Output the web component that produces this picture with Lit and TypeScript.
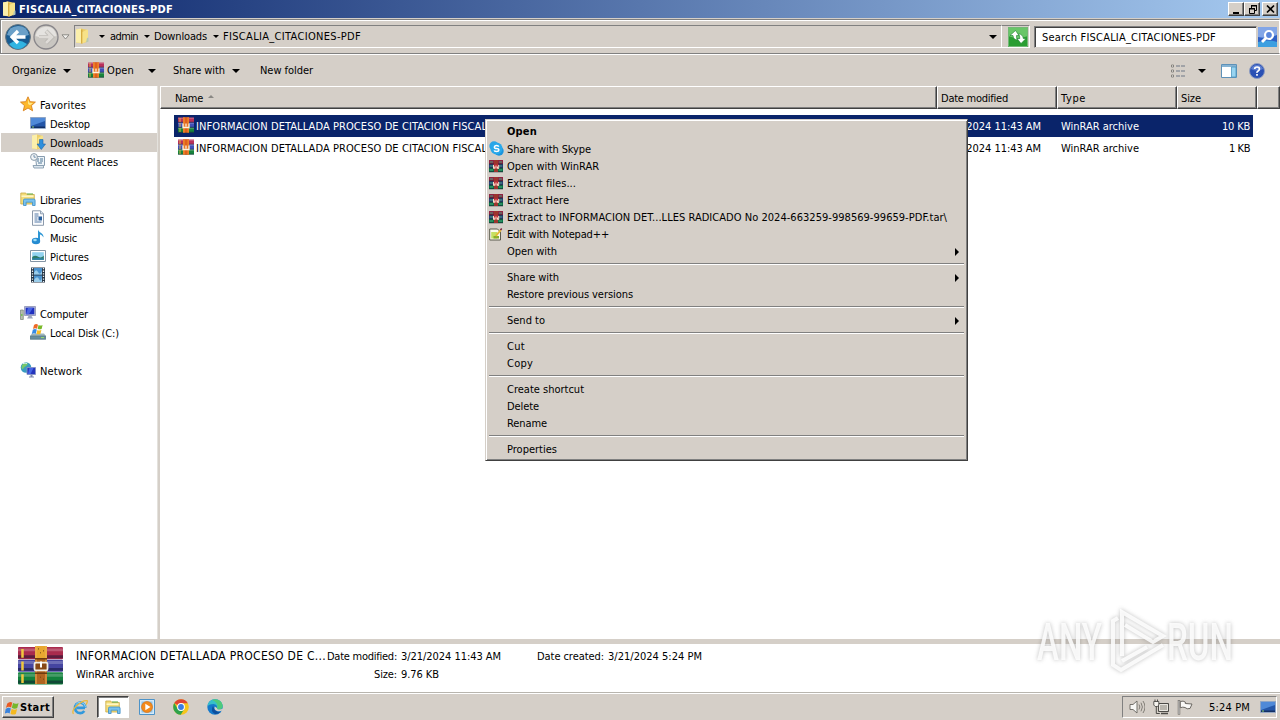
import { LitElement, html, css, svg, nothing, TemplateResult } from 'lit';
import { customElement, property } from 'lit/decorators.js';
import { classMap } from 'lit/directives/class-map.js';
import { styleMap } from 'lit/directives/style-map.js';

const FAMILY = '"DejaVu Sans Condensed", "DejaVu Sans", "Liberation Sans", sans-serif';

const FONTS: Record<string, string> = {
  normal: `11px ${FAMILY}`,
  bold: `bold 11px ${FAMILY}`,
  large: `12px ${FAMILY}`,
};

const ctx = document.createElement('canvas').getContext('2d')!;

/**
 * Single line of text tracked to a given width
 *
 * @tag xp-label
 */
@customElement('xp-label')
export class XpLabel extends LitElement {
  static styles = css`
    :host {
      display: block;
      flex: none;
      line-height: 15px;
      white-space: pre;
    }

    span {
      display: block;
      overflow: visible;
    }
  `;

  @property({ type: String }) text = '';
  @property({ type: Number }) w = 0;
  @property({ type: String }) kind = 'normal';

  render() {
    ctx.font = FONTS[this.kind];
    const spacing = (this.w - ctx.measureText(this.text).width) / this.text.length;
    const style = {
      font: FONTS[this.kind],
      'line-height': '15px',
      'letter-spacing': `${spacing.toFixed(3)}px`,
      width: `${this.w}px`,
    };
    return html`<span style=${styleMap(style)}>${this.text}</span>`;
  }
}

const label = (text: string, w: number, kind = 'normal') =>
  html`<xp-label .text=${text} .w=${w} .kind=${kind}></xp-label>`;

const ICONS: Record<string, TemplateResult> = {
  folder: svg`
    <path d="M1 1.500l5-1 7 1.500v11.500l-6 2-6-1z" fill="#edcf69"/>
    <path d="M1 1.500l5-1v14.500l-5-.5z" fill="#fbefab"/>
    <path d="M6 1.500h1.500v14H6z" fill="#d7ad42"/>
    <path d="M7.500 4l4.500-2.500 1 .5v10.500l-5.500 3z" fill="#f7e288"/>
    <path d="M12 10l1.500-.5v4l-2.500 1z" fill="#b5c9b4"/>`,
  rar: svg`
    <path d="M0 .5h16v5H0z" fill="#b8305a"/>
    <path d="M0 5.500h16v5H0z" fill="#4050b8"/>
    <path d="M0 10.500h16v5H0z" fill="#17843c"/>
    <path d="M0 1.200h16M0 6.200h16M0 11.200h16" stroke="#fff" stroke-opacity=".28"/>
    <path d="M0 5.200h16M0 10.200h16M0 15.200h16" stroke="#17203c" stroke-opacity=".75" stroke-width=".7"/>
    <path d="M2 1v4M2 6v4M2 11v4" stroke="#e8bf45" stroke-width=".9"/>
    <path d="M5 .3h6v15.400H5z" fill="#e2601a"/>
    <path d="M5.500.3h.9v15.400h-.9zM9.700.3h.8v15.400h-.8z" fill="#f4a63c"/>
    <path d="M5 6.500v4h6v-4M8 6.500v3" fill="none" stroke="#fff4dc" stroke-width="1.300"/>`,
  rarBig: svg`
    <rect width="45" height="12.500" y="1" rx="1" fill="#a92b4d"/>
    <rect width="45" height="12.500" y="14" rx="1" fill="#4545a0"/>
    <rect width="45" height="12.500" y="27" rx="1" fill="#12813d"/>
    <path d="M0 4h45M0 17h45M0 30h45" stroke="#fff" stroke-opacity=".22" stroke-width="3"/>
    <path d="M0 11h45M0 24h45M0 37h45" stroke="#100f30" stroke-opacity=".5" stroke-width="3"/>
    <path d="M4.500 3v9M4.500 16v9M4.500 29v9" stroke="#efc83e" stroke-width="2.500"/>
    <path d="M17 0h12v39H17z" fill="#b06420"/>
    <path d="M17 0h12v13H17z" fill="#e8a730"/>
    <path d="M18 0v39M28 0v39" stroke="#f1b65a" stroke-width="1"/>
    <path d="M17 13h12M17 28h12" stroke="#6d3a10" stroke-width="1.500"/>
    <path d="M20 3h1M25 5h1M22 7h1M22 32h1M25 34h1" stroke="#704414" stroke-width="1"/>
    <rect x="16.500" y="17" width="13" height="8" rx="1.500" fill="#874815" stroke="#f1eee4" stroke-width="1.800"/>
    <path d="M23 16v6" stroke="#fff" stroke-width="2"/>`,
  rarMenu: svg`
    <path d="M0 1h14v4H0z" fill="#8f2342"/>
    <path d="M0 5h14v4H0z" fill="#283f79"/>
    <path d="M0 9h14v4H0z" fill="#087847"/>
    <path d="M0 5h14M0 9h14M0 12.800h14" stroke="#192a32" stroke-width=".8"/>
    <path d="M1 3h3M10 3h3M1 7h3M10 7h3M1 11h3M10 11h3" stroke="#4ba27d"/>
    <path d="M5 1h4v12H5z" fill="#9c352d"/>
    <path d="M4 5.500h6v4.200H4z" fill="#c02b3a"/>
    <path d="M4.500 6v3.400h1.200V7.500M7 6.500v3M8.500 7.500v2h1.200V6" fill="none" stroke="#f3e1c9"/>`,
  star: svg`
    <path d="M8 .8l2.100 4.900 5.300.4-4 3.500 1.200 5.200L8 12l-4.700 2.800 1.200-5.200-4-3.500 5.300-.4z" fill="#fdb92d" stroke="#d9811f" stroke-width=".9"/>
    <path d="M8 3l1.300 3.700 3.700.4-3 2.200L8 8z" fill="#ffe889"/>`,
  desktop: svg`
    <path d="M.5 2.500h15v10.800H.5z" fill="#2456a8" stroke="#8fa5c5"/>
    <path d="M1 3h14v3L1 11z" fill="#4f89d8"/>
    <path d="M1 11.500h14v1.500H1z" fill="#122f64"/>
    <path d="M2 12h2" stroke="#8ed06c"/>`,
  downloads: svg`
    <path d="M2 1.500l5-1 6 1.500v11.500l-6 2-5-1z" fill="#edcf69"/>
    <path d="M2 1.500l5-1v14.500l-5-.5z" fill="#fbefab"/>
    <path d="M8 4l4-2.500 1 .5v9l-5 3z" fill="#f7e288"/>
    <path d="M9.500 5.500h3.500V10h2.500l-4.200 5.500L7 10h2.500z" fill="#2e8fdd" stroke="#1c63a8" stroke-width=".6"/>`,
  recent: svg`
    <path d="M5.500 3.500h9v9h-8z" fill="#eef4f8" stroke="#879caf"/>
    <path d="M3 12.500h10.500v2.500H4z" fill="#dce6ee" stroke="#879caf" stroke-width=".9"/>
    <path d="M7 6h2M10 6h3M7 8h2M10 8h3M8 10h4" stroke="#4f7796"/>
    <circle cx="4" cy="4" r="3.400" fill="#f2f5f7" stroke="#8a9baa"/>
    <path d="M4 2v2.200h1.800" fill="none" stroke="#55799d" stroke-width=".8"/>`,
  libraries: svg`
    <path d="M.8 2h5l1 1.500h7.500v9.500H.8z" fill="#f3dc79" stroke="#c9a945" stroke-width=".8"/>
    <path d="M1.500 5.200h12" stroke="#fff7c8" stroke-width="1.500"/>
    <path d="M7 3h6" stroke="#76b559" stroke-width="1.200"/>
    <path d="M3.500 14.500V9.300q0-1.300 1.300-1.300h9q1.300 0 1.300 1.300v5.200h-2.600v-3.300H6.100v3.300z" fill="#79c1ee" stroke="#3c8dc4" stroke-width=".8"/>`,
  documents: svg`
    <path d="M2.500.8h8l3 3v11.500h-11z" fill="#fbfcfe" stroke="#7f8fa3" stroke-width=".9"/>
    <path d="M10.500.8v3h3" fill="#d9e4f0" stroke="#7f8fa3" stroke-width=".8"/>
    <path d="M4.500 4h4M4.500 6h4M4.500 8h3M4.500 10h3M4.500 12h7" stroke="#426b9d" stroke-width=".9"/>
    <path d="M8.500 6.500h3.500v4H8.500z" fill="#285f9d"/>`,
  music: svg`
    <path d="M8 .5c.5 3 6 3.500 5.500 8-.7-1.500-2.200-2.800-3.500-3V12H8z" fill="#2d96d4"/>
    <ellipse cx="6" cy="12" rx="4.200" ry="3.300" fill="#258bd1"/>
    <ellipse cx="5" cy="11" rx="1.800" ry="1.200" fill="#9bdcf6"/>`,
  pictures: svg`
    <path d="M.5 2.500h15v11H.5z" fill="#fff" stroke="#8495a5"/>
    <path d="M2.200 4.200h11.600v7.600H2.200z" fill="#91d2ef"/>
    <path d="M2.200 9q3-2.200 6-.2t5.600-1.200v4.200H2.200z" fill="#2d7b68"/>
    <path d="M2.200 10.500q6-1 11.600 0v1.300H2.200z" fill="#2c82ad"/>`,
  videos: svg`
    <path d="M1 .5h14v15H1z" fill="#273544"/>
    <path d="M4 1h8v6.500H4zM4 8.500h8V15H4z" fill="#4b93cf"/>
    <path d="M4 6q2-5 4-1t4-1v3.500H4zM4 13q3-5 5-1t3-2v5H4z" fill="#9bcdea"/>
    <path d="M2.500 1v14M13.500 1v14" stroke="#eaf1f6" stroke-width="1.300" stroke-dasharray="1.300 1.300"/>`,
  computer: svg`
    <path d="M.5 5h2.800v9.500H.5z" fill="#b7bfae" stroke="#76827a" stroke-width=".7"/>
    <path d="M1.200 9h1.200v2H1.200z" fill="#6bc246"/>
    <path d="M4.500 1.500h11v9h-11z" fill="#b6bbd8" stroke="#8b90b4" stroke-width=".8"/>
    <path d="M5.700 2.700h8.600v6.600H5.700z" fill="#1f2fc0"/>
    <path d="M8 2.700h5L9 9.300H6z" fill="#4965e4"/>
    <path d="M8.500 11h3l1.500 2.500H7z" fill="#9aa3bd"/>`,
  disk: svg`
    <path d="M2 9.500h12l2 2.500v3.500H0V12z" fill="#9eb5bd"/>
    <path d="M.3 12h15.400v3.200H.3z" fill="#688e9d" stroke="#527481" stroke-width=".6"/>
    <path d="M11 13.600h3" stroke="#9be06a"/>
    <path d="M4 1q2-1.600 4-.3L7 4.700Q5 3.700 3 5z" fill="#ee6a28"/>
    <path d="M8.600 1q2 1 4 0l-1 4q-2 .8-4-.2z" fill="#79b928"/>
    <path d="M2.800 5.700q2-1.300 4-.2l-1 4.200q-2-1-4 .2z" fill="#358be4"/>
    <path d="M7.400 5.900q2 1 4 .1l-1 4q-2 .8-4-.2z" fill="#f7bd26"/>`,
  network: svg`
    <circle cx="6" cy="5.500" r="5.300" fill="#3a9cc0"/>
    <path d="M2 3q3-3 5-2T6 4 3 7 1.500 6zM7 5l3 1-2 3z" fill="#77c96a"/>
    <path d="M3 1.700Q5 .5 7 1.500" stroke="#d9f3f8" fill="none"/>
    <path d="M7 5.500h8.500v7H7z" fill="#2435bd" stroke="#8590c4" stroke-width=".9"/>
    <path d="M9.500 6h4l-3 6H8z" fill="#4565e6"/>
    <path d="M10.500 13h2v1.500h1.500v1H9v-1h1.500z" fill="#7f8aae"/>`,
  skype: svg`
    <circle cx="5" cy="5" r="4.700" fill="#2ba5e6"/>
    <circle cx="10" cy="10" r="4.700" fill="#1b94dd"/>
    <circle cx="7.500" cy="7.500" r="6" fill="#28a8ea"/>
    <path d="M9.800 5.600Q9.300 4.500 7.500 4.500T5.400 6t2.100 1.500T9.800 9 7.500 10.500 5.200 9.400" fill="none" stroke="#fff" stroke-width="1.500"/>`,
  notepad: svg`
    <path d="M.7 2h7.800L11.500 5v8H.7z" fill="#fbfbf0" stroke="#5b5a4c"/>
    <path d="M2.200 5h6v6.500h-6z" fill="#c5df62"/>
    <path d="M4.500 9h5.500v2.500H4.500z" fill="#87ae2c"/>
    <path d="M6 8.500l5-6 1.500 1.200-5 5.800z" fill="#e5b936"/>
    <path d="M11.500 1.800l1.200 1" stroke="#7a1b37" stroke-width="2"/>`,
  flag: svg`
    <path d="M2.600 3.500Q5.500.8 8.300 2.600L7 7.500Q4 5.800 1 8z" fill="#e95a22"/>
    <path d="M9.200 3q3 1.700 6.300-.1L14 8q-3 1.500-6.200-.2z" fill="#76b72c"/>
    <path d="M.8 9Q4 6.800 6.700 8.500l-1.400 5Q3 11.800-.3 13.800z" fill="#3a83dc"/>
    <path d="M7.600 8.800q3 1.700 6.200.1l-1.400 5q-3 1.500-6.100-.2z" fill="#f4b91f"/>`,
  ie: svg`
    <path d="M13 8.900H4.500M13.300 8.800A5.200 5.200 0 1 0 12.300 12" fill="none" stroke="#3299dc" stroke-width="2.700"/>
    <path d="M13.500 8A5.400 5.400 0 0 0 3.500 6" fill="none" stroke="#8fd6f8" stroke-width="1"/>
    <path d="M1.500 14.800Q-.8 12 5 6.500T15 1.600q1 .9-1 4" fill="none" stroke="#ebb93c" stroke-width="1.300"/>`,
  wmp: svg`
    <path d="M.5.500h15v15H.5z" fill="#d3e9f9" stroke="#4d93c8"/>
    <path d="M2.500 2.500h11v11h-11z" fill="#8dc0e5"/>
    <circle cx="8" cy="8" r="5.500" fill="#f38a1c" stroke="#d46a0b" stroke-width=".6"/>
    <path d="M6.300 4.800L11.500 8l-5.200 3.200z" fill="#fff"/>`,
  chrome: svg`
    <circle cx="8" cy="8" r="7.800" fill="#f6c51b"/>
    <path d="M8 8L1.200 4.100A7.800 7.800 0 0 1 14.800 4.200H8z" fill="#df4434"/>
    <path d="M1.250 4.100A7.800 7.800 0 0 0 7.700 15.800L11.300 9.900 8 8 4.700 9.900z" fill="#2fa24c"/>
    <circle cx="8" cy="8" r="3.900" fill="#fff"/>
    <circle cx="8" cy="8" r="2.900" fill="#3b7de3"/>`,
  edge: svg`
    <circle cx="8" cy="8" r="7.700" fill="#1579cb"/>
    <path d="M.5 7Q1.500.3 8 .3t7.700 6.500q0 3.500-4 3.700-2.300 0-1.700-1.200.5-3.800-3.500-4.300Q2.500 5 .5 7z" fill="#37bfca"/>
    <path d="M8 .3q6.500 0 7.700 6.500 0 3.500-4 3.700l-1.700-.8q2-6-5-8.800z" fill="#4fca7b"/>
    <path d="M6 7q-3 5 2 8 3 .5 5.500-2-5.500.5-7.500-6z" fill="#0d4f9d"/>
    <path d="M7.800 7.500Q6.500 10.500 10 12q3 .7 6-.8V9.700q-2.300.9-4.500.8-2-.2-1.500-1.500z" fill="#d6cfc8"/>`,
  sound: svg`
    <path d="M1 5.500h3L8 2v12L4 10.500H1z" fill="#f7f7f5" stroke="#66645f" stroke-width=".9"/>
    <path d="M10 5.500q1.700 2.500 0 5M12 3.700q2.800 4.300 0 8.600M14 2q4 6 0 12" fill="none" stroke="#77746d" stroke-width=".9"/>`,
  lan: svg`
    <path d="M5.500 4.500h10v8h-10z" fill="#b9b5ad" stroke="#4d4b47"/>
    <path d="M6.500 5.500h8v6h-8z" fill="none" stroke="#f4f2ee" stroke-width=".8"/>
    <path d="M8 14.500h7" stroke="#4d4b47" stroke-width="1.500"/>
    <path d="M.8 2.500h5v3.500L4.500 7.500H2.200L.8 6z" fill="#f5f3ee" stroke="#4d4b47" stroke-width=".9"/>
    <path d="M2 2.500V.5M4.500 2.500V.5M3.300 7.500v7h3.500" fill="none" stroke="#4d4b47"/>`,
  action: svg`
    <path d="M2 1v14.500" stroke="#5d5a55" stroke-width="2.400"/>
    <path d="M2 1.500v13.500" stroke="#fff" stroke-width=".9"/>
    <path d="M3.300 2.500q3-1 5 .5v1.500l6.700.5-2 4.500q-3 1-5-1-2-.8-4.700.2z" fill="#faf9f7" stroke="#5d5a55" stroke-width=".9"/>`,
  views: svg`
    <path d="M1.500 2h2v2h-2zM1.500 7h2v2h-2zM1.500 12h2v2h-2z" fill="#fff" stroke="#85827d"/>
    <path d="M6 3h4M11 3h4M6 8h4M11 8h4M6 13h4M11 13h4" stroke="#6f7886" stroke-width="1.200"/>`,
  preview: svg`
    <path d="M.5 1.500h15v13H.5z" fill="#fff" stroke="#5d91b8"/>
    <path d="M1 2h14v2H1z" fill="#86b3d3"/>
    <path d="M10.500 4h4.500v10h-4.500z" fill="#98d4f1" stroke="#4d96be" stroke-width=".8"/>`,
  help: svg`
    <circle cx="8" cy="8" r="7.500" fill="#2a50b4" stroke="#8e9cc0"/>
    <path d="M2 6q1-4 6-4t6 4q-6 3-12 0z" fill="#7d9be2" fill-opacity=".6"/>
    <path d="M5.700 6q0-2 2.400-2t2.300 2q0 1.200-1.300 1.900T8 9.800M8 11v1.700" fill="none" stroke="#fff" stroke-width="1.700"/>`,
  go: svg`
    <path d="M0 0h20v20H0z" fill="#2a9e32"/>
    <path d="M0 0h20v9Q10 13 0 9z" fill="#69c668"/>
    <path d="M.5.5h19v19H.5z" fill="none" stroke="#72b875"/>
    <path d="M7.500 3.500L2 8.500h3q.2 4 4.500 4.500-1.300-2-1-4.500H11z" fill="#fff" stroke="#16812b" stroke-width=".6"/>
    <path d="M13 16.500l5-5h-2.700Q15 7.500 10.500 6.800q1.500 2 1.300 4.700H9z" fill="#fff" stroke="#16812b" stroke-width=".6"/>`,
  search: svg`
    <path d="M0 0h19v20H0z" fill="#2e5fc4"/>
    <path d="M0 0h19v8Q10 12 0 10z" fill="#83a6e7"/>
    <path d="M0 15q10-3 19 0v5H0z" fill="#3d9fe0"/>
    <circle cx="11" cy="8" r="4" fill="#5a86dc" stroke="#fff" stroke-width="2.200"/>
    <path d="M8 11l-4 4" stroke="#fff" stroke-width="2.800"/>`,
  back: svg`
    <circle cx="13" cy="13" r="12.400" fill="#195b91" stroke="#62727d"/>
    <path d="M2 11Q4 2.200 13 2T24 11Q13 15 2 11z" fill="#6ba0c8"/>
    <path d="M4 20q9-7 18 0-4 5-9 5t-9-5z" fill="#31b4e2"/>
    <path d="M13 7l-6 6 6 6M7.500 13H20.500" fill="none" stroke="#fff" stroke-width="3.300"/>`,
  forward: svg`
    <circle cx="13" cy="13" r="12" fill="#c9c6c1" stroke="#88868a" stroke-width="1.300"/>
    <path d="M2.500 12Q4 3 13 2.700T23.500 12Q13 16 2.500 12z" fill="#e5e3e0"/>
    <path d="M13 7l6 6-6 6M18.500 13H6" fill="none" stroke="#b4b1ac" stroke-width="4"/>
    <path d="M13 7l6 6-6 6M18.500 13H6" fill="none" stroke="#dedbd7" stroke-width="2.800"/>`,
  history: svg`<path d="M1 .8h7L4.500 5z" fill="#f3f1ee" stroke="#85827e" stroke-width=".9"/>`,
  minimize: svg`<path d="M3 10h6" stroke="#000" stroke-width="2"/>`,
  restore: svg`<path d="M5 2.500h6M5.500 2v3M10.500 2v5.500H9M3 5.500h6M3.500 5v5.500h5V5" fill="none" stroke="#000"/><path d="M5 2h6v1.500H5zM3 5h6v1.500H3z"/>`,
  close: svg`<path d="M3 2.500l7 7M10 2.500l-7 7" stroke="#000" stroke-width="1.700"/>`,
};

const icon = (name: string, width = 16, height = width, box = `0 0 ${width} ${height}`) =>
  html`<svg class="icon" width=${width} height=${height} viewBox=${box} preserveAspectRatio="none">${ICONS[name]}</svg>`;

interface NavItem {
  text: string;
  w: number;
  icon: string;
  child?: boolean;
  selected?: boolean;
}

const NAV: NavItem[][] = [
  [
    { text: 'Favorites', w: 46, icon: 'star' },
    { text: 'Desktop', w: 40, icon: 'desktop', child: true },
    { text: 'Downloads', w: 53, icon: 'downloads', child: true, selected: true },
    { text: 'Recent Places', w: 68, icon: 'recent', child: true },
  ],
  [
    { text: 'Libraries', w: 41, icon: 'libraries' },
    { text: 'Documents', w: 54, icon: 'documents', child: true },
    { text: 'Music', w: 27, icon: 'music', child: true },
    { text: 'Pictures', w: 39, icon: 'pictures', child: true },
    { text: 'Videos', w: 32, icon: 'videos', child: true },
  ],
  [
    { text: 'Computer', w: 48, icon: 'computer' },
    { text: 'Local Disk (C:)', w: 69, icon: 'disk', child: true },
  ],
  [{ text: 'Network', w: 42, icon: 'network' }],
];

const FILES = [
  { size: '10 KB', sizeWidth: 28, selected: true },
  { size: '1 KB', sizeWidth: 21, selected: false },
];

interface MenuItem {
  text: string;
  w: number;
  icon?: string;
  bold?: boolean;
  sub?: boolean;
}

const MENU: MenuItem[][] = [
  [
    { text: 'Open', w: 30, bold: true },
    { text: 'Share with Skype', w: 84, icon: 'skype' },
    { text: 'Open with WinRAR', w: 92, icon: 'rarMenu' },
    { text: 'Extract files...', w: 69, icon: 'rarMenu' },
    { text: 'Extract Here', w: 62, icon: 'rarMenu' },
    { text: 'Extract to INFORMACION DET...LLES RADICADO No 2024-663259-998569-99659-PDF.tar\\', w: 440, icon: 'rarMenu' },
    { text: 'Edit with Notepad++', w: 102, icon: 'notepad' },
    { text: 'Open with', w: 50, sub: true },
  ],
  [
    { text: 'Share with', w: 52, sub: true },
    { text: 'Restore previous versions', w: 126 },
  ],
  [{ text: 'Send to', w: 38, sub: true }],
  [
    { text: 'Cut', w: 18 },
    { text: 'Copy', w: 26 },
  ],
  [
    { text: 'Create shortcut', w: 77 },
    { text: 'Delete', w: 32 },
    { text: 'Rename', w: 40 },
  ],
  [{ text: 'Properties', w: 50 }],
];

/**
 * Explorer window with context menu and taskbar
 *
 * @tag app-root
 */
@customElement('app-root')
export class AppRoot extends LitElement {
  static styles = css`
    :host {
      --face: #d5cfc8;

      position: relative;
      display: flex;
      flex-direction: column;
      width: 1280px;
      height: 720px;
      overflow: hidden;
      background: var(--face);
      color: #000;
    }

    *,
    *::before {
      box-sizing: border-box;
    }

    .icon {
      display: block;
      flex: none;
    }

    .arrow {
      flex: none;
      width: 0;
      height: 0;
      border: 4px solid transparent;
      border-top-color: #000;
      border-bottom: 0;
    }

    .arrow--sm {
      border-width: 3px 3px 0;
    }

    .title {
      display: flex;
      align-items: center;
      height: 18px;
      padding: 0 2px 0 2px;
      background: linear-gradient(90deg, #0a246a, #a6caf0);
      color: #fff;
    }

    .title xp-label {
      margin-left: 1px;
    }

    .title .winbtn:first-of-type {
      margin-left: auto;
    }

    .winbtn {
      width: 16px;
      height: 14px;
      padding: 0 1px;
      background: var(--face);
      border: 1px solid;
      border-color: #fff #404040 #404040 #fff;
      box-shadow: inset -1px -1px #808080;
    }

    .winbtn--close {
      margin-left: 2px;
    }

    .address {
      display: flex;
      align-items: center;
      height: 35px;
      margin-top: 1px;
      padding-left: 4px;
      border: 1px solid;
      border-color: #808080 #fff #808080 #808080;
      box-shadow: inset 1px 1px #fff;
    }

    .nav-buttons {
      display: flex;
      align-items: center;
      gap: 2px;
      width: 69px;
    }

    .path {
      display: flex;
      align-items: center;
      width: 928px;
      height: 23px;
      padding-right: 4px;
      border: 1px solid;
      border-color: #808080 #fff #fff #808080;
    }

    .path > .icon {
      margin-bottom: 2px;
    }

    .path .arrow--sm {
      margin: 0 4px 0 6px;
    }

    .path > .icon + .arrow--sm {
      margin: 0 5px 0 8px;
    }

    .path .arrow--end {
      margin-left: auto;
    }

    .refresh {
      display: flex;
      align-items: center;
      width: 28px;
      height: 23px;
      padding-left: 6px;
      border: 1px solid #fff;
      border-left: 0;
      border-top-color: #808080;
    }

    .search {
      display: flex;
      align-items: center;
      width: 223px;
      height: 22px;
      margin-left: 4px;
      padding: 2px 0 0 7px;
      background: #fff;
      border: 1px solid;
      border-color: #808080 var(--face) var(--face) #808080;
      box-shadow: inset 1px 1px #404040;
    }

    .address > .icon {
      margin-left: 1px;
    }

    .toolbar {
      display: flex;
      align-items: center;
      height: 32px;
      padding: 0 15px 0 12px;
      border-top: 1px solid #fff;
    }

    .toolbar > .icon {
      margin-bottom: 2px;
    }

    .toolbar .arrow {
      margin-left: 7px;
    }

    .toolbar .icon + xp-label {
      margin-left: 3px;
    }

    .toolbar .gap {
      width: 17px;
    }

    .toolbar .gap--wide {
      width: 20px;
    }

    .toolbar .arrow--open {
      margin-left: 14px;
    }

    .toolbar-right {
      display: flex;
      align-items: center;
      margin-left: auto;
    }

    .toolbar-right .arrow {
      margin: 0 15px 0 12px;
    }

    .toolbar-right .icon:last-child {
      margin-left: 12px;
    }

    .body {
      display: flex;
      height: 553px;
    }

    .sidebar {
      width: 158px;
      padding-top: 9px;
      background: #fff;
      border-right: 1px solid #e4e2dd;
    }

    .nav-group {
      margin-bottom: 19px;
    }

    .nav-item {
      display: flex;
      align-items: center;
      gap: 4px;
      height: 19px;
      margin-left: 1px;
      padding-left: 19px;
    }

    .nav-item .icon {
      margin-bottom: 1px;
    }

    .nav-item xp-label {
      margin-top: 2px;
    }

    .nav-item--child {
      padding-left: 29px;
    }

    .nav-item--selected {
      background: var(--face);
    }

    .list {
      flex: 1;
      margin-left: 2px;
      background: #fff;
    }

    .columns {
      display: grid;
      grid-template-columns: 777px 120px 120px 80px 23px;
      height: 23px;
    }

    .column {
      display: flex;
      align-items: center;
      padding-left: 3px;
      padding-top: 1px;
      background: var(--face);
      border: 1px solid;
      border-color: #fff #404040 #404040 #fff;
      box-shadow: inset -1px -1px #808080;
    }

    .column:first-child {
      padding-left: 14px;
    }

    .sort {
      margin: -4px 0 0 5px;
      border: 3px solid transparent;
      border-top: 0;
      border-bottom-color: #8a8884;
    }

    .rows {
      padding: 6px 0 0 14px;
    }

    .row {
      display: grid;
      grid-template-columns: 767px 120px 121px 71px;
      align-items: center;
      width: 1079px;
      height: 22px;
    }

    .row--selected {
      background: #0a246a;
      color: #fff;
    }

    .row-name {
      display: flex;
      align-items: center;
      gap: 2px;
      padding: 0 0 2px 4px;
    }

    .row-name xp-label {
      margin-top: 2px;
    }

    .row-size {
      display: flex;
      justify-content: flex-end;
      padding-right: 3px;
    }

    .details {
      display: flex;
      height: 54px;
      padding: 2px 0 0 18px;
      background: #fff;
      border-top: 5px solid var(--face);
      border-bottom: 1px solid #b8b5ae;
    }

    .details-col {
      display: flex;
      flex-direction: column;
      gap: 3px;
      padding-top: 3px;
    }

    .details-col--name {
      width: 251px;
      margin-left: 13px;
    }

    .pair {
      display: flex;
      gap: 4px;
    }

    .pair--right {
      padding-left: 47px;
    }

    .details-col--created {
      margin-left: 36px;
    }

    .taskbar {
      display: flex;
      align-items: center;
      height: 27px;
      padding: 0 3px 0 2px;
      border-top: 1px solid #fff;
    }

    .start {
      display: flex;
      align-items: center;
      gap: 1px;
      width: 52px;
      height: 22px;
      padding-left: 2px;
      border: 1px solid;
      border-color: #fff #404040 #404040 #fff;
      box-shadow: inset -1px -1px #808080;
    }

    .tasks {
      display: flex;
      align-items: center;
      gap: 18px;
      margin-left: 18px;
    }

    .task-active {
      display: flex;
      align-items: center;
      justify-content: center;
      width: 32px;
      height: 22px;
      margin: 0 -8px 0 -9px;
      background: #fff;
      border: 1px solid;
      border-color: #404040 #fff #fff #404040;
      box-shadow: inset 1px 1px #808080;
    }

    .tray {
      display: flex;
      align-items: center;
      gap: 8px;
      width: 155px;
      height: 22px;
      margin-left: auto;
      padding-left: 6px;
      border: 1px solid;
      border-color: #808080 #fff #fff #808080;
    }

    .tray xp-label {
      margin-left: 8px;
    }

    .tray .icon:last-child {
      margin-left: 2px;
    }

    .menu {
      position: absolute;
      left: 485px;
      top: 119px;
      width: 483px;
      height: 342px;
      padding: 2px;
      background: var(--face);
      border: 1px solid;
      border-color: var(--face) #404040 #404040 var(--face);
      box-shadow: inset 1px 1px #fff, inset -1px -1px #808080;
    }

    .menu-item {
      display: flex;
      align-items: center;
      height: 17px;
      padding-right: 6px;
    }

    .menu-group:first-child .menu-item:nth-child(-n + 2) {
      height: 18px;
    }

    .menu-icon {
      width: 19px;
      padding-left: 2px;
    }

    .menu-icon .icon {
      margin: -1px 0 0 -1px;
    }

    .menu-arrow {
      margin-left: auto;
      border: 4px solid transparent;
      border-left-color: #000;
      border-right: 0;
    }

    .menu-group + .menu-group::before {
      content: '';
      display: block;
      height: 2px;
      margin: 0 1px;
      border-top: 1px solid #808080;
      border-bottom: 1px solid #fff;
    }

    .menu-group + .menu-group {
      display: flow-root;
      padding-top: 3px;
    }

    .menu-group + .menu-group .menu-item:first-of-type {
      margin-top: 4px;
    }

    .watermark {
      position: absolute;
      left: 1030px;
      top: 604px;
      overflow: visible;
      filter: drop-shadow(0 0 2px rgba(70, 70, 70, 0.4));
    }

    .watermark text {
      font: 500 51px Roboto, 'Liberation Sans', sans-serif;
    }
  `;

  renderAddress() {
    return html`
      <div class="address">
        <div class="nav-buttons">
          ${icon('back', 26)} ${icon('forward', 26)} ${icon('history', 9, 6)}
        </div>
        <div class="path">
          ${icon('folder', 16)}
          <i class="arrow arrow--sm"></i>
          ${label('admin', 28)}
          <i class="arrow arrow--sm"></i>
          ${label('Downloads', 53)}
          <i class="arrow arrow--sm"></i>
          ${label('FISCALIA_CITACIONES-PDF', 138)}
          <i class="arrow arrow--end"></i>
        </div>
        <div class="refresh">${icon('go', 20)}</div>
        <div class="search">${label('Search FISCALIA_CITACIONES-PDF', 174)}</div>
        ${icon('search', 19, 20)}
      </div>
    `;
  }

  renderToolbar() {
    return html`
      <div class="toolbar">
        ${label('Organize', 44)}
        <i class="arrow"></i>
        <span class="gap"></span>
        ${icon('rar')} ${label('Open', 27)}
        <i class="arrow arrow--open"></i>
        <span class="gap"></span>
        ${label('Share with', 52)}
        <i class="arrow"></i>
        <span class="gap gap--wide"></span>
        ${label('New folder', 53)}
        <div class="toolbar-right">
          ${icon('views')}
          <i class="arrow"></i>
          ${icon('preview')} ${icon('help')}
        </div>
      </div>
    `;
  }

  renderNavItem(item: NavItem) {
    const classes = {
      'nav-item': true,
      'nav-item--child': !!item.child,
      'nav-item--selected': !!item.selected,
    };
    return html`<div class=${classMap(classes)}>${icon(item.icon)} ${label(item.text, item.w)}</div>`;
  }

  renderList() {
    return html`
      <div class="list">
        <div class="columns">
          <div class="column">${label('Name', 28)}<i class="sort"></i></div>
          <div class="column">${label('Date modified', 67)}</div>
          <div class="column">${label('Type', 25)}</div>
          <div class="column">${label('Size', 20)}</div>
          <div class="column"></div>
        </div>
        <div class="rows">
          ${FILES.map(
            (file) => html`
              <div class=${classMap({ row: true, 'row--selected': file.selected })}>
                <div class="row-name">
                  ${icon('rar')} ${label('INFORMACION DETALLADA PROCESO DE CITACION FISCAL', 291)}
                </div>
                ${label('3/21/2024 11:43 AM', 100)} ${label('WinRAR archive', 78)}
                <div class="row-size">${label(file.size, file.sizeWidth)}</div>
              </div>
            `
          )}
        </div>
      </div>
    `;
  }

  renderDetails() {
    return html`
      <div class="details">
        ${icon('rarBig', 45, 39, '0 0 45 40')}
        <div class="details-col details-col--name">
          ${label('INFORMACION DETALLADA PROCESO DE C...', 250, 'large')} ${label('WinRAR archive', 78)}
        </div>
        <div class="details-col">
          <div class="pair">${label('Date modified:', 70)} ${label('3/21/2024 11:43 AM', 100)}</div>
          <div class="pair pair--right">${label('Size:', 23)} ${label('9.76 KB', 38)}</div>
        </div>
        <div class="details-col details-col--created">
          <div class="pair">${label('Date created:', 67)} ${label('3/21/2024 5:24 PM', 94)}</div>
        </div>
      </div>
    `;
  }

  renderTaskbar() {
    return html`
      <div class="taskbar">
        <div class="start">${icon('flag', 14, 15, '0 0 16 15')} ${label('Start', 30, 'bold')}</div>
        <div class="tasks">
          ${icon('ie')}
          <div class="task-active">${icon('libraries')}</div>
          ${icon('wmp')} ${icon('chrome')} ${icon('edge')}
        </div>
        <div class="tray">
          ${icon('sound')} ${icon('lan')} ${icon('action')} ${label('5:24 PM', 41)} ${icon('desktop')}
        </div>
      </div>
    `;
  }

  renderMenuItem(item: MenuItem) {
    return html`
      <div class="menu-item">
        <div class="menu-icon">
          ${item.icon ? icon(item.icon, item.icon === 'skype' ? 15 : 14) : nothing}
        </div>
        ${label(item.text, item.w, item.bold ? 'bold' : 'normal')}
        ${item.sub ? html`<i class="menu-arrow"></i>` : nothing}
      </div>
    `;
  }

  render() {
    return html`
      <div class="title">
        ${icon('folder')} ${label('FISCALIA_CITACIONES-PDF', 154, 'bold')}
        <div class="winbtn">${icon('minimize', 12)}</div>
        <div class="winbtn">${icon('restore', 12)}</div>
        <div class="winbtn winbtn--close">${icon('close', 12)}</div>
      </div>
      ${this.renderAddress()} ${this.renderToolbar()}
      <div class="body">
        <div class="sidebar">
          ${NAV.map((group) => html`<div class="nav-group">${group.map((item) => this.renderNavItem(item))}</div>`)}
        </div>
        ${this.renderList()}
      </div>
      ${this.renderDetails()} ${this.renderTaskbar()}
      <div class="menu">
        ${MENU.map((group) => html`<div class="menu-group">${group.map((item) => this.renderMenuItem(item))}</div>`)}
      </div>
      <svg class="watermark" width="240" height="76">
        <g fill="#fff" fill-opacity=".85">
          <text x="7" y="56" textLength="65" lengthAdjust="spacingAndGlyphs">ANY</text>
          <text x="137" y="56" textLength="66" lengthAdjust="spacingAndGlyphs">RUN</text>
        </g>
        <path d="M92 52V8l41 24-10 6-28-17M88 14l-5 3v44l8 5 42-25M92 57l25-14" fill="none" stroke="#fff" stroke-opacity=".85" stroke-width="4"/>
      </svg>
    `;
  }
}

declare global {
  interface HTMLElementTagNameMap {
    'app-root': AppRoot;
    'xp-label': XpLabel;
  }
}
